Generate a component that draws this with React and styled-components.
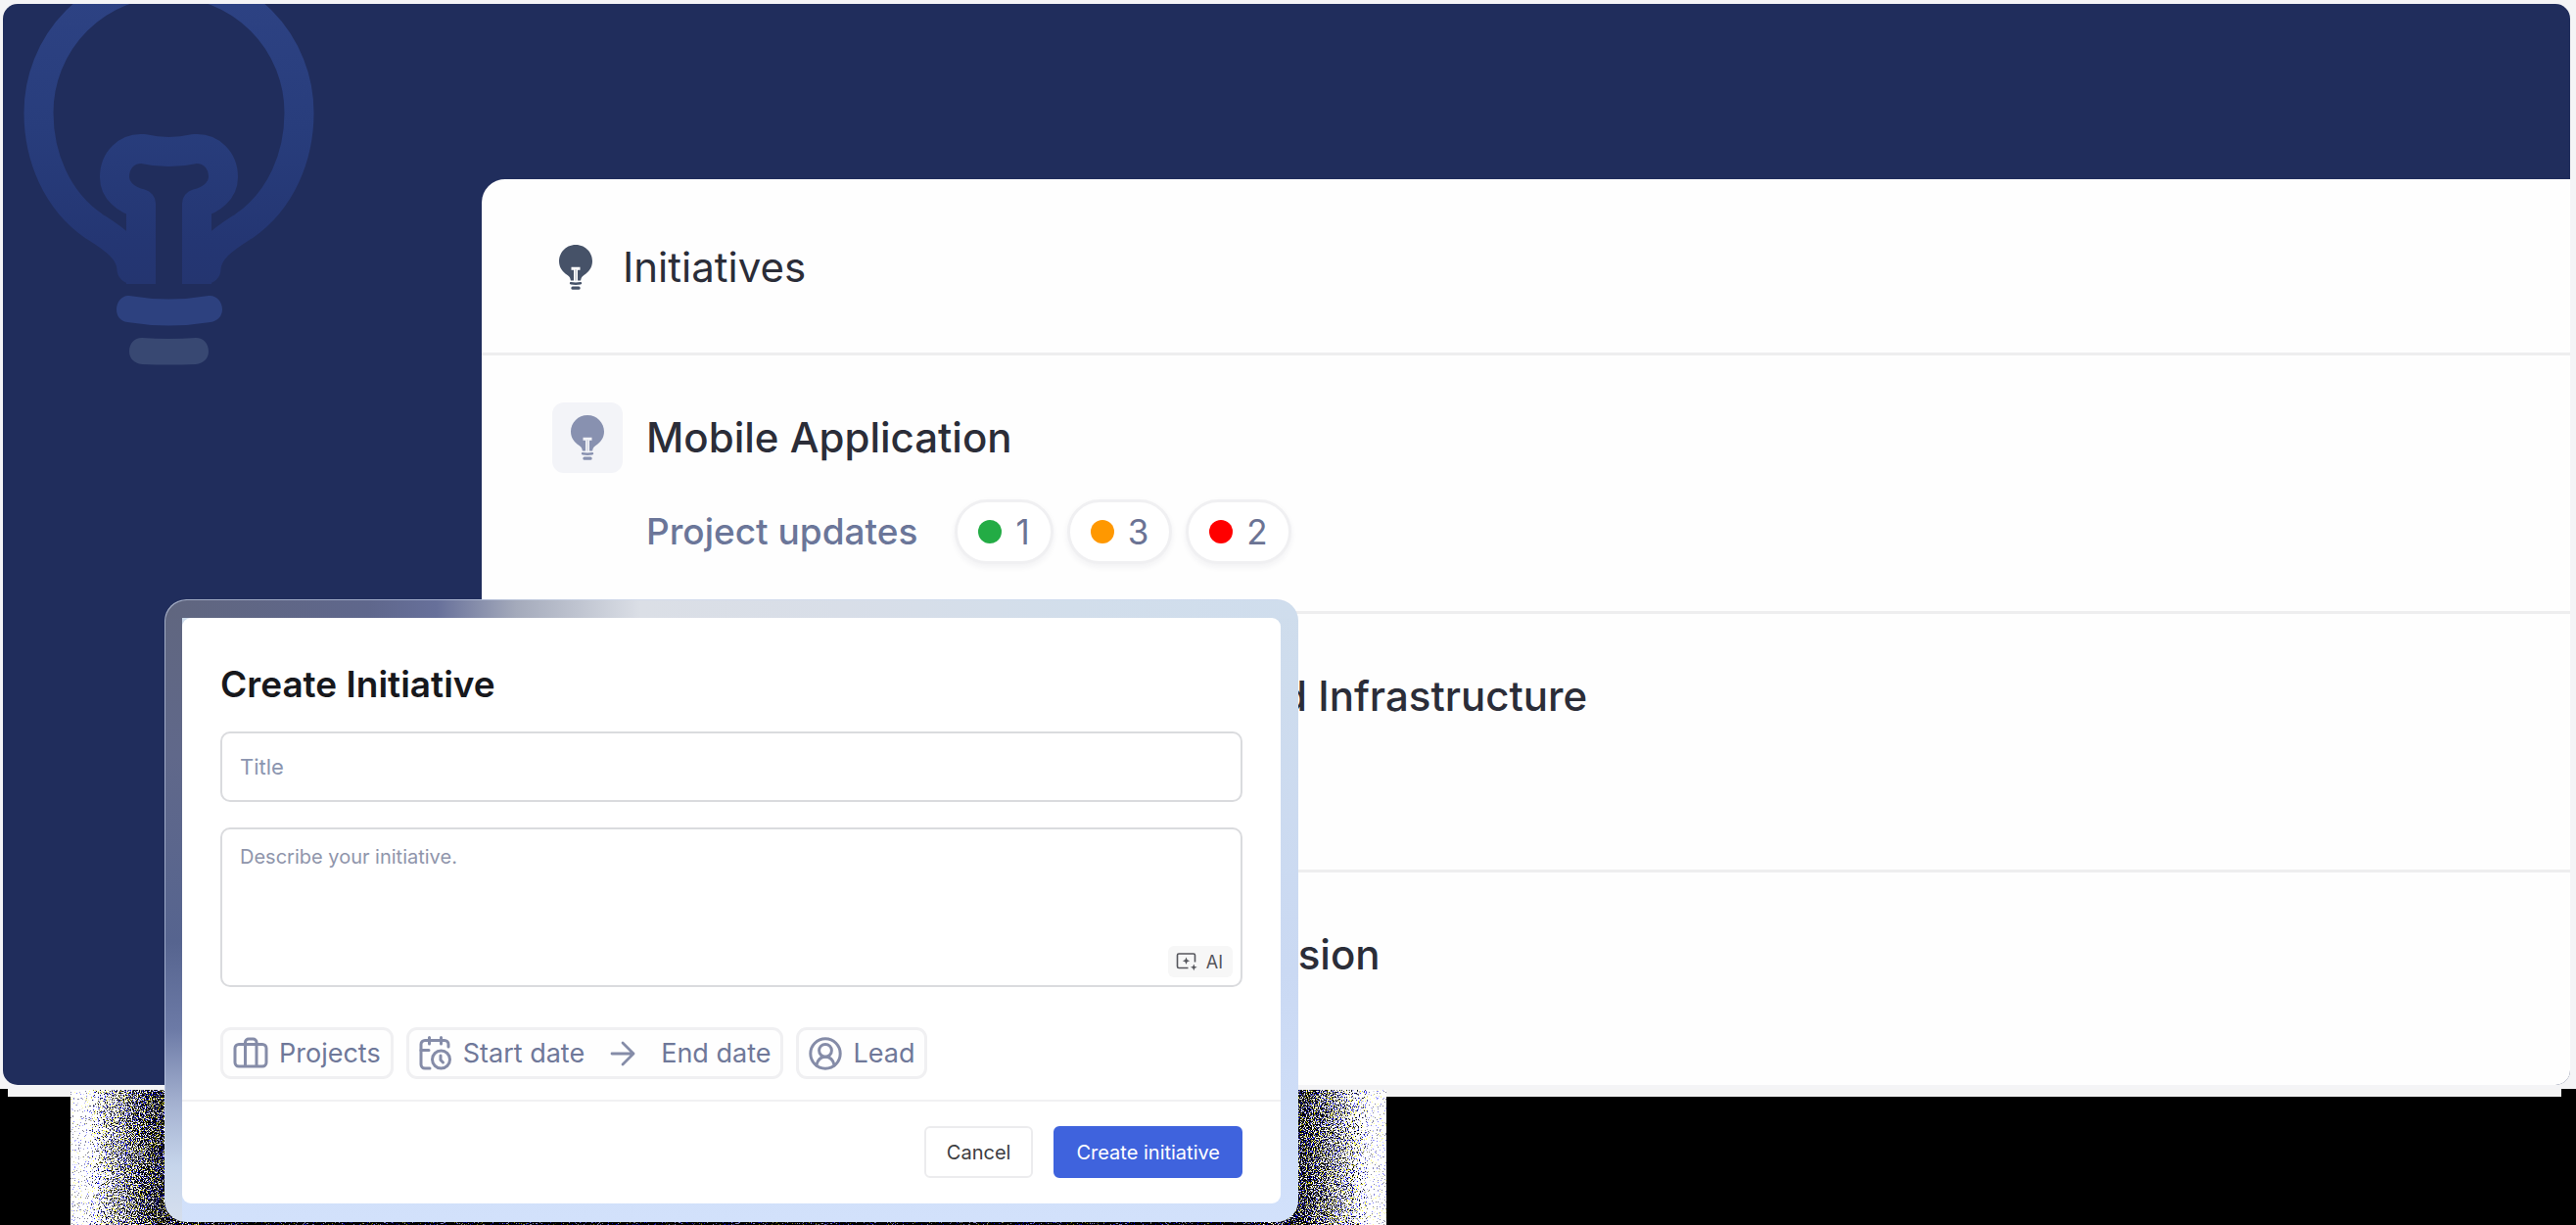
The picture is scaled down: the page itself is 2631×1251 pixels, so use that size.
import React from "react";
import styled, { createGlobalStyle } from "styled-components";

const GlobalStyle = createGlobalStyle`
  *, *::before, *::after { box-sizing: border-box; }
  body { margin: 0; background: #000; font-family: Inter, "Liberation Sans", sans-serif; }
  h1, h2, h3, ul { margin: 0; padding: 0; }
  button, input, textarea { font-family: inherit; margin: 0; }
  svg { display: block; flex: none; }
`;

const Page = styled.div`
  position: relative;
  min-height: 100vh;
  overflow: hidden;
  background: #000;
`;

const Frame = styled.div`
  padding: 4px 6px 4px 3px;
  background: #f4f4f6;
`;

const Ledge = styled.div`
  height: 8px;
  margin: 0 15px 0 8px;
  background: #f4f4f4;
`;

const Hero = styled.main`
  position: relative;
  padding: 179px 0 0 489px;
  border-radius: 15px;
  overflow: hidden;
  background: #202d5c;
`;

const Watermark = styled.svg`
  position: absolute;
  top: 0;
  left: 0;
`;

const Board = styled.section`
  border-top-left-radius: 24px;
  background: #fefefe;
`;

const BoardHeader = styled.header`
  display: flex;
  align-items: center;
  gap: 31px;
  height: 180px;
  padding: 3px 79px 0;
  border-bottom: 3px solid #eeeeef;
`;

const BoardTitle = styled.h1`
  font-size: 42px;
  line-height: 52px;
  font-weight: 400;
  color: #2b2d38;
`;

const List = styled.ul`
  list-style: none;
`;

const Row = styled.li`
  display: flex;
  flex-direction: column;
  gap: 27px;
  min-height: 264px;
  padding: 48px 72px;
  border-bottom: 3px solid #eeeeef;

  &:last-child {
    min-height: 217px;
    border-bottom: 0;
  }
`;

const RowHead = styled.div`
  display: flex;
  align-items: center;
  gap: 24px;
`;

const IconTile = styled.span`
  display: flex;
  align-items: center;
  justify-content: center;
  width: 72px;
  height: 72px;
  border-radius: 12px;
  background: #f3f4f8;
`;

const RowTitle = styled.h2`
  font-size: 42px;
  line-height: 52px;
  font-weight: 500;
  color: #2b2d38;
  white-space: nowrap;
`;

const Updates = styled.div`
  display: flex;
  align-items: center;
  gap: 14px;
  padding-left: 96px;
`;

const UpdatesLabel = styled.span`
  margin-right: 24px;
  font-size: 37px;
  line-height: 44px;
  font-weight: 500;
  color: #6b7699;
`;

const Pill = styled.span`
  display: flex;
  align-items: center;
  gap: 14px;
  height: 66px;
  padding: 0 21px;
  border: 3px solid #f0f0f2;
  border-radius: 33px;
  background: #fff;
  box-shadow: 0 3px 6px rgba(30, 40, 60, 0.06);
  font-size: 35px;
  line-height: 44px;
  font-weight: 400;
  color: #6b7394;
`;

const Dot = styled.span`
  width: 24px;
  height: 24px;
  border-radius: 50%;
  background: ${(p) => p.$color};
`;

const Grain = styled.svg`
  position: absolute;
  top: 1113px;
  left: 72px;
`;

const Dialog = styled.div`
  position: absolute;
  top: 612px;
  left: 168px;
  width: 1158px;
  padding: 19px 18px;
  border-radius: 22px;
  box-shadow: inset 1px 1px 0 rgba(205, 216, 240, 0.6);
  background:
    linear-gradient(90deg, #60667f 0%, #5f678c 18%, #67709a 24%, #a4aabb 31%, #dbdfe6 42%, #d8dee8 60%, #d2deeb 80%, #cfdded 100%) top / 100% 19px no-repeat,
    linear-gradient(180deg, #60667f 0%, #60688a 25%, #56648f 55%, #6c7aa6 69%, #a4b1d0 81%, #c6d5eb 91%, #d6dfee 100%) left / 18px 100% no-repeat,
    linear-gradient(180deg, #cfddec 0%, #cad9f3 60%, #d2e1fb 100%);
`;

const Form = styled.form`
  border-radius: 9px;
  overflow: hidden;
  background: #fff;
`;

const Body = styled.div`
  display: flex;
  flex-direction: column;
  gap: 26px;
  padding: 46px 39px 21px;
`;

const DialogTitle = styled.h2`
  font-size: 37px;
  line-height: 44px;
  font-weight: 600;
  color: #17181c;
`;

const TitleInput = styled.input`
  width: 100%;
  height: 72px;
  padding: 0 18px;
  border: 2px solid #dadbde;
  border-radius: 10px;
  outline: none;
  background: #fff;
  font-size: 22px;
  color: #2b2d38;

  &::placeholder { color: #8b95b0; opacity: 1; }
`;

const DescriptionBox = styled.div`
  position: relative;
`;

const DescriptionInput = styled.textarea`
  display: block;
  width: 100%;
  height: 163px;
  padding: 14px 18px;
  border: 2px solid #dadbde;
  border-radius: 10px;
  outline: none;
  resize: none;
  background: #fff;
  font-size: 20px;
  line-height: 28px;
  color: #2b2d38;

  &::placeholder { color: #8f95ab; opacity: 1; }
`;

const AiButton = styled.button`
  position: absolute;
  right: 10px;
  bottom: 10px;
  display: flex;
  align-items: center;
  gap: 9px;
  height: 32px;
  padding: 0 10px 0 8px;
  border: 0;
  border-radius: 6px;
  background: #f7f7f7;
  font-size: 18px;
  color: #55565c;
`;

const Chips = styled.div`
  display: flex;
  gap: 13px;
  padding-top: 15px;
`;

const Chip = styled.div`
  display: flex;
  align-items: center;
  height: 53px;
  border: 3px solid #f0f0f2;
  border-radius: 11px;
  background: #fefefe;
  color: #858ca8;
`;

const ChipButton = styled.button`
  display: flex;
  align-items: center;
  gap: 11px;
  height: 47px;
  padding: 0 10px;
  border: 0;
  background: transparent;
  font-size: 27px;
  line-height: 36px;
  color: #6f7899;

  svg { color: #858ca8; }
`;

const ArrowSlot = styled.span`
  padding: 0 16px;
`;

const Footer = styled.footer`
  display: flex;
  justify-content: flex-end;
  gap: 21px;
  padding: 25px 39px 26px;
  border-top: 2px solid #f1f1f2;
`;

const Action = styled.button`
  height: 53px;
  padding: 0 21px;
  border: 2px solid ${(p) => (p.$primary ? "#3f63dd" : "#ececee")};
  border-radius: 6px;
  background: ${(p) => (p.$primary ? "#3f63dd" : "#fff")};
  color: ${(p) => (p.$primary ? "#fff" : "#3c3d41")};
  font-size: 20px;
  font-weight: 400;
`;

const BulbIcon = ({ color, cut }) => (
  <svg width="34" height="46" viewBox="0 0 34 46" aria-hidden="true">
    <path
      fill={color}
      d="M17 0C7.500 0 0 7.500 0 16.800C0 23.200 3.600 28 8.600 30.900C11 32.400 11.600 34 11.900 36.600H22.100C22.400 34 23 32.400 25.400 30.900C30.400 28 34 23.200 34 16.800C34 7.500 26.500 0 17 0Z"
    />
    <path fill={cut} d="M12.500 22.800H21.500V25.800H19V37H15V25.800H12.500Z" />
    <rect x="16.400" y="25" width="1.200" height="11.600" fill={color} opacity="0.350" />
    <path fill={color} d="M12 38Q17 38.800 22 38Q23.200 38 23.200 39.300Q23.200 40.300 22 40.500Q17 41.300 12 40.500Q10.800 40.300 10.800 39.300Q10.800 38 12 38Z" />
    <rect x="12.400" y="42.600" width="9.200" height="3.200" rx="1.500" fill={color} />
  </svg>
);

const BriefcaseIcon = () => (
  <svg width="36" height="36" viewBox="0 0 36 36" fill="none" stroke="currentColor" strokeWidth="3" strokeLinejoin="round" aria-hidden="true">
    <rect x="2" y="8.500" width="32" height="22.500" rx="4" />
    <path d="M12.500 31V6.500A3.500 3.500 0 0 1 16 3H20.500A3.500 3.500 0 0 1 24 6.500V31" />
  </svg>
);

const CalendarClockIcon = () => (
  <svg width="34" height="36" viewBox="0 0 34 36" fill="none" stroke="currentColor" strokeWidth="3" strokeLinecap="round" strokeLinejoin="round" aria-hidden="true">
    <path d="M30 11V8.500A4 4 0 0 0 26 4.500H6A4 4 0 0 0 2 8.500V29A4 4 0 0 0 6 33H11" />
    <path d="M10.500 1.500V8M22.500 1.500V8M2 14.500H10" />
    <circle cx="22.500" cy="24" r="9" />
    <path d="M22 20V24.500L24.500 27" />
  </svg>
);

const ArrowIcon = () => (
  <svg width="26" height="26" viewBox="0 0 26 26" fill="none" stroke="currentColor" strokeWidth="2.800" strokeLinecap="round" strokeLinejoin="round" aria-hidden="true">
    <path d="M2 13H24M13 2L24 13L13 24" />
  </svg>
);

const UserIcon = () => (
  <svg width="34" height="34" viewBox="0 0 34 34" fill="none" stroke="currentColor" strokeWidth="3" strokeLinecap="round" aria-hidden="true">
    <circle cx="17" cy="17" r="15.200" />
    <circle cx="17" cy="13.800" r="6.400" />
    <path d="M7.800 29C9 23.500 12.500 20.300 17 20.300S25 23.500 26.200 29" />
  </svg>
);

const SparkIcon = () => (
  <svg width="22" height="20" viewBox="0 0 22 20" fill="none" aria-hidden="true">
    <path d="M12.500 16.500H3A1.500 1.500 0 0 1 1.500 15V3.500A1.500 1.500 0 0 1 3 2H18A1.500 1.500 0 0 1 19.500 3.500V10.500" stroke="currentColor" strokeWidth="1.600" />
    <path fill="currentColor" d="M10.500 5.500L11.600 8.200L14.200 9.200L11.600 10.200L10.500 13L9.400 10.200L6.800 9.200L9.400 8.200Z" />
    <path fill="currentColor" d="M18.300 12.500L19.300 14.900L21.700 15.800L19.300 16.700L18.300 19.200L17.300 16.700L14.900 15.800L17.300 14.900Z" />
  </svg>
);

const BulbWatermark = () => (
  <Watermark width="340" height="390" viewBox="3 4 340 390" fill="none" aria-hidden="true">
    <defs>
      <linearGradient id="glass" gradientUnits="userSpaceOnUse" x1="0" y1="0" x2="0" y2="290">
        <stop offset="0" stopColor="#2d4283" />
        <stop offset="0.450" stopColor="#283d7c" />
        <stop offset="0.850" stopColor="#243673" />
        <stop offset="1" stopColor="#243570" />
      </linearGradient>
    </defs>
    <g stroke="url(#glass)" strokeWidth="30">
      <path d="M134.500 275C134 254 113 242 96 231C58 205 39.500 160 39.500 115A133 133 0 0 1 305.500 115C305.500 160 287 205 249 231C232 242 211 254 210.500 275" strokeLinecap="round" />
      <path d="M144 290V208C128 204 117 194 117 181C117 163 130 151 146 152Q172.500 158 199 152C215 151 228 163 228 181C228 194 217 204 201 208V290" strokeLinejoin="round" />
    </g>
    <path fill="#2d417f" d="M132 302Q172.500 309 213 302C221 301 227 308 227 316C227 323 222 328 215 329Q172.500 336 130 329C123 328 119 323 119 316C119 308 125 301 132 302Z" />
    <path fill="#384872" d="M145 345Q172.500 347 200 345C208 345 213 351 213 359C213 366 208 371 200 372Q172.500 373 145 372C137 371 132 366 132 359C132 351 137 345 145 345Z" />
  </Watermark>
);

const GrainShadow = () => (
  <Grain width="1344" height="138" viewBox="0 0 1344 138" aria-hidden="true">
    <defs>
      <linearGradient id="fade" gradientUnits="userSpaceOnUse" x1="0" y1="0" x2="1344" y2="0">
        <stop offset="0" stopColor="#fff" />
        <stop offset="0.012" stopColor="#fff" />
        <stop offset="0.028" stopColor="#b4b4b4" />
        <stop offset="0.046" stopColor="#808080" />
        <stop offset="0.060" stopColor="#585858" />
        <stop offset="0.076" stopColor="#404042" />
        <stop offset="0.120" stopColor="#000008" />
        <stop offset="0.880" stopColor="#000008" />
        <stop offset="0.924" stopColor="#404042" />
        <stop offset="0.940" stopColor="#585858" />
        <stop offset="0.954" stopColor="#808080" />
        <stop offset="0.972" stopColor="#b4b4b4" />
        <stop offset="0.988" stopColor="#fff" />
        <stop offset="1" stopColor="#fff" />
      </linearGradient>
      <filter id="speckle" x="0" y="0" width="1" height="1" colorInterpolationFilters="sRGB">
        <feTurbulence type="fractalNoise" baseFrequency="0.850" numOctaves="2" seed="4" result="n" />
        <feColorMatrix in="n" type="matrix" values="2.600 0.500 0 0 -1.050  2.600 0.500 0 0 -1.050  2.100 0 1.500 0 -1.300  0 0 0 0 1" result="c" />
        <feComposite in="SourceGraphic" in2="c" operator="arithmetic" k1="0" k2="1" k3="1" k4="-0.500" result="m" />
        <feComponentTransfer in="m">
          <feFuncR type="linear" slope="4" intercept="-1.500" />
          <feFuncG type="linear" slope="4" intercept="-1.500" />
          <feFuncB type="linear" slope="4" intercept="-1.400" />
          <feFuncA type="linear" slope="0" intercept="1" />
        </feComponentTransfer>
      </filter>
    </defs>
    <rect width="1344" height="138" fill="url(#fade)" filter="url(#speckle)" />
  </Grain>
);

const initiatives = [
  {
    name: "Mobile Application",
    updates: [
      { color: "#23ac45", count: 1 },
      { color: "#ff9800", count: 3 },
      { color: "#ff0000", count: 2 },
    ],
  },
  { name: "Enterprise Core Management and Infrastructure" },
  { name: "International Client Market Expansion" },
];

export default function App() {
  return (
    <>
      <GlobalStyle />
      <Page>
        <Frame>
          <Hero>
            <BulbWatermark />
            <Board>
              <BoardHeader>
                <BulbIcon color="#465268" cut="#fefefe" />
                <BoardTitle>Initiatives</BoardTitle>
              </BoardHeader>
              <List>
                {initiatives.map((item) => (
                  <Row key={item.name}>
                    <RowHead>
                      <IconTile>
                        <BulbIcon color="#8891b0" cut="#f3f4f8" />
                      </IconTile>
                      <RowTitle>{item.name}</RowTitle>
                    </RowHead>
                    {item.updates && (
                      <Updates>
                        <UpdatesLabel>Project updates</UpdatesLabel>
                        {item.updates.map((u) => (
                          <Pill key={u.color}>
                            <Dot $color={u.color} />
                            {u.count}
                          </Pill>
                        ))}
                      </Updates>
                    )}
                  </Row>
                ))}
              </List>
            </Board>
          </Hero>
        </Frame>
        <Ledge />
        <GrainShadow />
        <Dialog role="dialog" aria-labelledby="dialog-title">
          <Form onSubmit={(e) => e.preventDefault()}>
            <Body>
              <DialogTitle id="dialog-title">Create Initiative</DialogTitle>
              <TitleInput type="text" placeholder="Title" aria-label="Title" />
              <DescriptionBox>
                <DescriptionInput placeholder="Describe your initiative." aria-label="Description" />
                <AiButton type="button">
                  <SparkIcon />
                  AI
                </AiButton>
              </DescriptionBox>
              <Chips>
                <Chip>
                  <ChipButton type="button">
                    <BriefcaseIcon />
                    Projects
                  </ChipButton>
                </Chip>
                <Chip>
                  <ChipButton type="button">
                    <CalendarClockIcon />
                    Start date
                  </ChipButton>
                  <ArrowSlot>
                    <ArrowIcon />
                  </ArrowSlot>
                  <ChipButton type="button">End date</ChipButton>
                </Chip>
                <Chip>
                  <ChipButton type="button">
                    <UserIcon />
                    Lead
                  </ChipButton>
                </Chip>
              </Chips>
            </Body>
            <Footer>
              <Action type="button">Cancel</Action>
              <Action type="submit" $primary>
                Create initiative
              </Action>
            </Footer>
          </Form>
        </Dialog>
      </Page>
    </>
  );
}
